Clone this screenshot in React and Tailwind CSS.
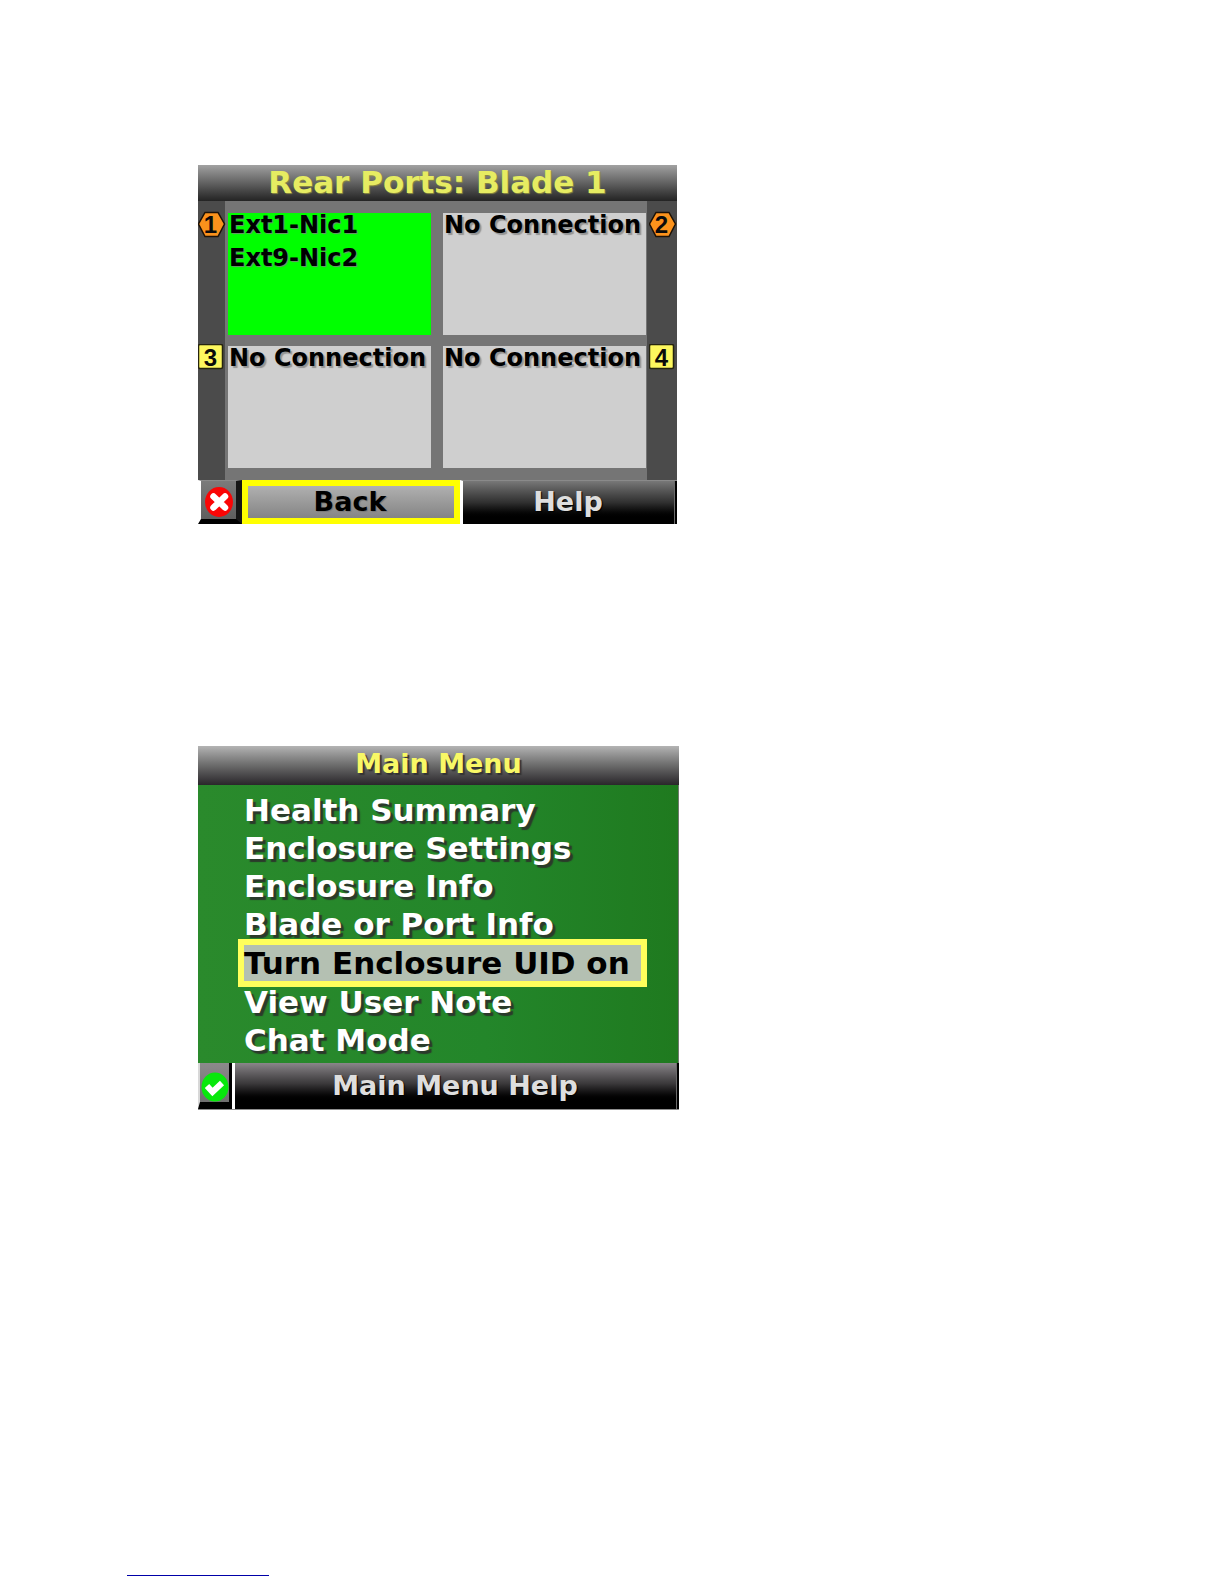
import React from 'react';

const ports = [
  { id: 1, lines: ['Ext1-Nic1', 'Ext9-Nic2'], connected: true },
  { id: 2, lines: ['No Connection'], connected: false },
  { id: 3, lines: ['No Connection'], connected: false },
  { id: 4, lines: ['No Connection'], connected: false },
];

const menuItems = [
  'Health Summary',
  'Enclosure Settings',
  'Enclosure Info',
  'Blade or Port Info',
  'Turn Enclosure UID on',
  'View User Note',
  'Chat Mode',
];

// Hexagon badge for the upper bays, square badge for the lower ones
const BayBadge = ({ id }) => (
  <svg viewBox="0 0 28 27" className="block h-[27px] w-7" role="img" aria-label={`Bay ${id}`}>
    {id < 3 ? (
      <polygon points="7,1.5 20,1.5 26.5,13 20,25.5 7,25.5 0.5,13" fill="#fb921c" stroke="#1c1208" strokeWidth="1.5" />
    ) : (
      <rect x="0.5" y="0.5" width="24" height="24" rx="1.5" fill="#fdf75e" stroke="#26240f" strokeWidth="1.5" />
    )}
    <text
      x="12.5"
      y="21.5"
      textAnchor="middle"
      fill="#0b0b0b"
      className="font-['Liberation_Sans',sans-serif] text-[24px] font-bold"
    >
      {id}
    </text>
  </svg>
);

const BayRail = ({ ids, className }) => (
  <div className={`grid grid-rows-2 gap-y-[11px] bg-[#4b4b4b] pt-2.5 pb-3.5 ${className}`}>
    {ids.map((id) => (
      <BayBadge key={id} id={id} />
    ))}
  </div>
);

const PortCell = ({ port }) => (
  <div
    className={`h-[122px] whitespace-nowrap pl-px text-2xl/[33px] font-bold text-black ${
      port.connected
        ? 'bg-[#00ff00] [text-shadow:1px_1px_1px_#6f8f6f]'
        : 'bg-[#cfcfcf] [text-shadow:2px_2px_1px_#949494]'
    }`}
  >
    <div className="-mt-1">
      {port.lines.map((line) => (
        <p key={line}>{line}</p>
      ))}
    </div>
  </div>
);

const RearPortsScreen = () => (
  <section className="w-[479px] max-w-full">
    <h2 className="h-9 bg-linear-to-b from-[#a2a2a2] via-[#626262] to-[#242424] text-center text-[31px]/[34px] font-bold text-[#e6ec62] [text-shadow:1px_1px_1px_#8a8a40]">
      Rear Ports: Blade 1
    </h2>
    <div className="flex bg-[#757575]">
      <BayRail ids={[1, 3]} className="w-[27px]" />
      <div className="grid flex-1 grid-cols-2 gap-x-3 gap-y-[11px] py-3 pr-px pl-[3px]">
        {ports.map((port) => (
          <PortCell key={port.id} port={port} />
        ))}
      </div>
      <BayRail ids={[2, 4]} className="w-[30px] pl-0.5" />
    </div>
    <div className="flex h-11 bg-black">
      <button
        type="button"
        aria-label="Enclosure status: error"
        className="flex w-11 items-end justify-center border-t border-r-[6px] border-b-[5px] border-l-[3px] border-t-[#8a8a8a] border-r-[#161616] border-b-black border-l-white bg-linear-to-b from-[#7b7b7b] to-[#5f5f5f]"
      >
        <svg viewBox="0 0 30 32" className="h-8 w-[30px]" aria-hidden="true">
          <ellipse cx="15" cy="15" rx="14" ry="15" fill="#fa0505" />
          <path d="M9.5 9.5 L21 20.5 M21 9.5 L9.5 20.5" stroke="#fff" strokeWidth="6.5" strokeLinecap="round" />
        </svg>
      </button>
      <button
        type="button"
        className="w-[218px] border-[6px] border-[#ffff00] bg-linear-to-b from-[#b0b0b0] to-[#858585] pr-0.5 text-[27px]/[32px] font-bold text-black [text-shadow:1px_1px_1px_#777]"
      >
        Back
      </button>
      <button
        type="button"
        className="flex-1 border-t border-l-[3px] border-t-[#8a8a8a] border-l-white bg-linear-to-b from-[#787878] via-[#303030] via-50% to-black to-90% pr-1 pb-0.5 text-[27px]/[32px] font-bold text-[#dedede] [text-shadow:1px_1px_1px_#000] shadow-[inset_-2px_0_0_#000,inset_-3px_0_0_#6b6b6b]"
      >
        Help
      </button>
    </div>
  </section>
);

const MainMenuScreen = () => (
  <section className="w-[481px] max-w-full">
    <h2 className="h-[39px] bg-linear-to-b from-[#b4b4b4] via-[#6b6b6b] to-[#2a272b] text-center text-[27px]/[36px] font-bold text-[#f8f866] [text-shadow:2px_2px_1px_#333]">
      Main Menu
    </h2>
    <ul className="border-r border-[#6f7a6f] bg-linear-to-r from-[#2a8a2c] via-[#23862a] via-60% to-[#1f7a1f] pt-1.5 pr-[31px] pb-1 pl-10">
      {menuItems.map((item) => (
        <li key={item}>
          {item === 'Turn Enclosure UID on' ? (
            <button
              type="button"
              className="relative -my-1 block h-12 w-full border-[6px] border-[#ffff5c] bg-[#b4c0b2] text-left text-[31px]/[36px] font-bold whitespace-nowrap text-black"
            >
              {item}
            </button>
          ) : (
            <button
              type="button"
              className="block h-[38px] w-full pl-1.5 text-left text-[31px]/[38px] font-bold whitespace-nowrap text-white [text-shadow:3px_3px_1px_#2b3a2b]"
            >
              {item}
            </button>
          )}
        </li>
      ))}
    </ul>
    <div className="flex h-[47px] border-b border-[#8f8f8f] bg-black">
      <button
        type="button"
        aria-label="Enclosure status: OK"
        className="flex w-[34px] items-end justify-center border-r-[3px] border-b-[7px] border-l-2 border-r-black border-b-black border-l-[#d8d8d8] bg-linear-to-b from-[#8c8a8c] to-[#6f6f6f]"
      >
        <svg viewBox="0 0 28 30" className="h-[30px] w-7 shrink-0" aria-hidden="true">
          <ellipse cx="14" cy="15" rx="13.5" ry="14.5" fill="#08e80c" />
          <path d="M6 14 L11.5 20 L21 11" fill="none" stroke="#fff" strokeWidth="6" />
        </svg>
      </button>
      <button
        type="button"
        className="flex-1 border-l-[3px] border-white bg-linear-to-b from-[#8a868a] via-[#3a383a] via-45% to-black to-85% pr-1 text-[27px]/[44px] font-bold text-[#dedede] [text-shadow:1px_1px_1px_#000] shadow-[inset_-2px_0_0_#000,inset_-3px_0_0_#6b6b6b]"
      >
        Main Menu Help
      </button>
    </div>
  </section>
);

export default function App() {
  return (
    <main className="min-h-screen bg-white font-['DejaVu_Sans',sans-serif]">
      <div className="flex flex-col gap-[222px] pt-[165px] pl-[198px]">
        <RearPortsScreen />
        <MainMenuScreen />
      </div>
      <hr className="mt-[465px] ml-[127px] h-px w-[142px] border-0 bg-[#0000a8]" />
    </main>
  );
}
